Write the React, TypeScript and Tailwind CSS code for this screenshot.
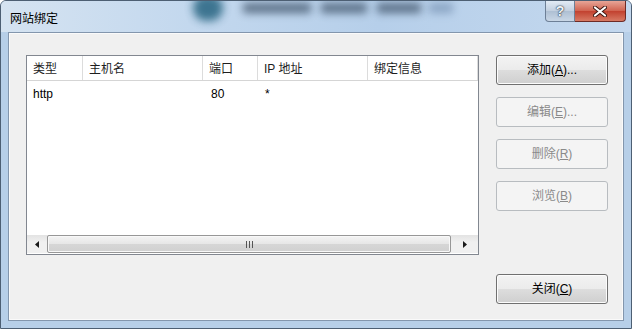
import React from 'react';

const font = { fontFamily: '"Liberation Sans", "Noto Sans CJK SC", sans-serif' };

const Btn = ({ label, k, tail = '', disabled = false }: { label: string; k: string; tail?: string; disabled?: boolean }) => (
  <div
    className={`h-[30px] w-[112px] rounded-[3px] border flex items-center justify-center text-[12px] ${
      disabled
        ? 'border-[#b8bcc0] bg-[#f4f4f4] text-[#8a8a8a]'
        : 'border-[#707070] bg-[linear-gradient(#f3f3f3_0%,#ebebeb_50%,#dddddd_51%,#cfcfcf_100%)] text-black shadow-[inset_0_0_0_1px_#fcfcfc]'
    }`}
  >
    {label}(<span className="underline">{k}</span>){tail}
  </div>
);

const cols = [
  { name: '类型', w: 'w-[56px]' },
  { name: '主机名', w: 'w-[120px]' },
  { name: '端口', w: 'w-[55px]' },
  { name: 'IP 地址', w: 'w-[110px]' },
  { name: '绑定信息', w: 'w-[110px]' },
];

export default function App() {
  return (
    <div
      className="w-[632px] h-[329px] bg-[#b7cfe8] border border-[#4d5f73] rounded-t-[6px] flex flex-col overflow-hidden"
      style={font}
    >
      {/* title bar */}
      <div className="h-[31px] shrink-0 flex bg-[linear-gradient(90deg,#d5e3f1_0%,#c3d8ee_30%,#b6cfea_60%,#c4d8ee_100%)]">
        <div className="pl-[9px] pt-[9px] text-[12px] text-black w-[180px]">网站绑定</div>
        <div className="flex items-start w-[360px] overflow-hidden">
          <div className="mt-[-6px] ml-[12px] w-[30px] h-[26px] rounded-full bg-[#2f6a86] blur-[4px] opacity-90" />
          <div className="mt-[2px] ml-[20px] w-[68px] h-[10px] bg-[#3c5066] blur-[4px] opacity-75" />
          <div className="mt-[2px] ml-[10px] w-[46px] h-[10px] bg-[#3c5066] blur-[4px] opacity-75" />
          <div className="mt-[2px] ml-[10px] w-[44px] h-[10px] bg-[#3c5066] blur-[4px] opacity-75" />
          <div className="mt-[2px] ml-[8px] w-[24px] h-[10px] bg-[#6a86a8] blur-[4px] opacity-60" />
        </div>
        <div className="flex items-start ml-auto mr-[5px]">
          <div className="w-[30px] h-[21px] rounded-bl-[4px] border border-t-0 border-[#6d7f96] bg-[linear-gradient(#e2ebf5,#c2cfdf_50%,#aebfd3_51%,#c9d7e6)] flex items-center justify-center text-[14px] font-bold text-[#eef2f6] [text-shadow:0_0_2px_#1c2b3f,0_0_1px_#1c2b3f]">
            ?
          </div>
          <div className="w-[51px] h-[21px] rounded-br-[4px] border border-t-0 border-l-0 border-[#6e2b26] bg-[linear-gradient(#e7a597,#d0624f_50%,#c2412f_51%,#d77a64)] flex items-center justify-center">
            <svg width="14" height="11" viewBox="0 0 14 11">
              <path d="M2 1.5 L12 9.5 M12 1.5 L2 9.5" stroke="#3b1712" strokeWidth="4" strokeLinecap="round" />
              <path d="M2 1.5 L12 9.5 M12 1.5 L2 9.5" stroke="#ffffff" strokeWidth="2.2" strokeLinecap="round" />
            </svg>
          </div>
        </div>
      </div>

      {/* client area */}
      <div className="mx-[7px] h-[289px] shrink-0 bg-[#f0f0f0] border border-[#8396ad] shadow-[inset_0_0_0_1px_#fafafa] flex pl-[17px] pt-[22px] pb-[16px] pr-[16px]">
        {/* list view */}
        <div className="w-[453px] h-[200px] border border-[#828790] bg-white flex flex-col">
          <div className="h-[25px] flex border-b border-[#d5d5d5] text-[12px] text-[#1e1e1e]">
            {cols.map((c) => (
              <div key={c.name} className={`${c.w} shrink-0 border-r border-[#dcdcdc] pl-[6px] pt-[2px] flex items-center`}>
                {c.name}
              </div>
            ))}
          </div>
          <div className="h-[26px] flex items-center text-[12px] text-black">
            <div className="w-[56px] pl-[6px]">http</div>
            <div className="w-[120px]" />
            <div className="w-[55px] pl-[8px]">80</div>
            <div className="w-[110px] pl-[7px]">*</div>
          </div>
          <div className="flex-1" />
          {/* horizontal scrollbar */}
          <div className="h-[18px] mb-[1px] flex bg-[linear-gradient(#e3e3e3,#f0f0f0_40%,#f0f0f0)]">
            <div className="w-[20px] flex items-center justify-center">
              <svg width="4" height="7" viewBox="0 0 4 7">
                <path d="M4 0 L0 3.5 L4 7 Z" fill="#1a1a1a" />
              </svg>
            </div>
            <div className="flex-1 rounded-[2px] border border-[#979797] bg-[linear-gradient(#f4f4f4,#e6e6e6_50%,#d6d6d6_51%,#d0d0d0)] shadow-[inset_0_0_0_1px_#f8f8f8] flex items-center justify-center gap-[2px]">
              <div className="w-[1px] h-[7px] bg-[#555]" />
              <div className="w-[1px] h-[7px] bg-[#555]" />
              <div className="w-[1px] h-[7px] bg-[#555]" />
            </div>
            <div className="w-[27px] flex items-center justify-center">
              <svg width="4" height="7" viewBox="0 0 4 7">
                <path d="M0 0 L4 3.5 L0 7 Z" fill="#1a1a1a" />
              </svg>
            </div>
          </div>
        </div>

        {/* buttons */}
        <div className="ml-[17px] flex flex-col">
          <div className="flex flex-col gap-[12px]">
            <Btn label="添加" k="A" tail="..." />
            <Btn label="编辑" k="E" tail="..." disabled />
            <Btn label="删除" k="R" disabled />
            <Btn label="浏览" k="B" disabled />
          </div>
          <div className="mt-auto">
            <Btn label="关闭" k="C" />
          </div>
        </div>
      </div>
      <div className="flex-1" />
    </div>
  );
}
